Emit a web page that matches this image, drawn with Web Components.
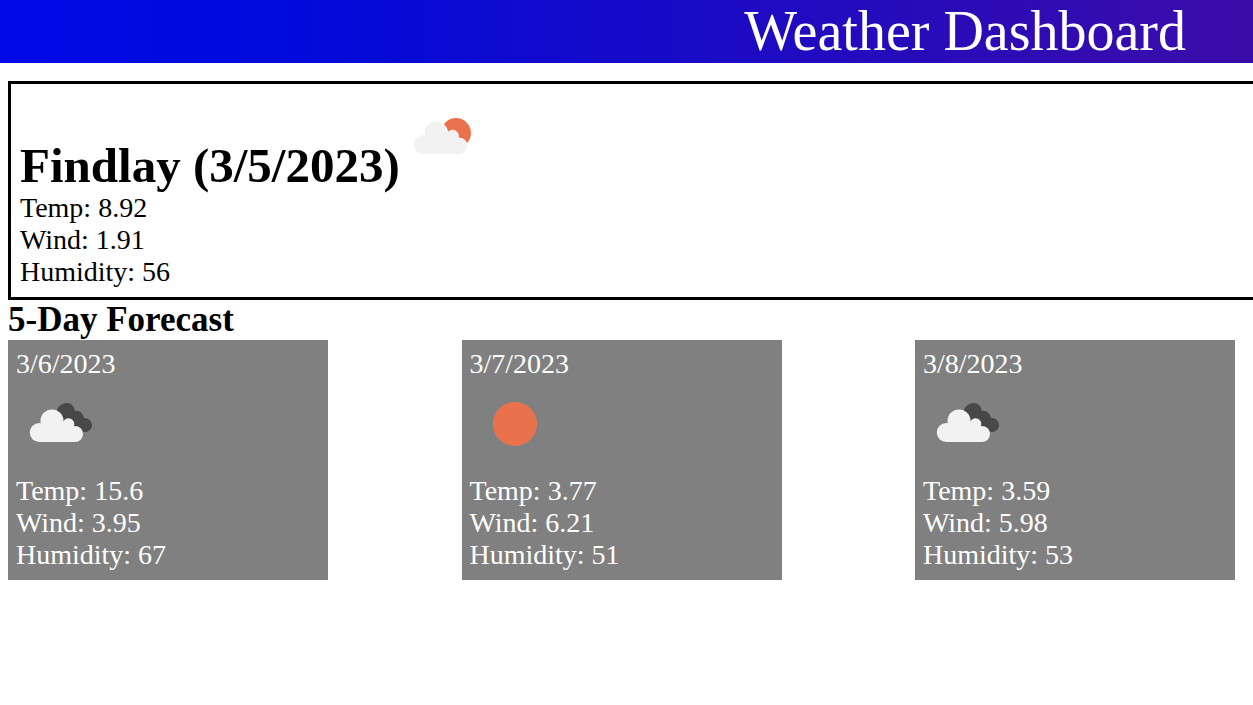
<!DOCTYPE html>
<html lang="en">
<head>
<meta charset="utf-8">
<title>Weather Dashboard</title>
<style>
body{margin:0;background:#fff;color:#000;font:28px/32px "Liberation Serif","Times New Roman",serif;overflow-x:hidden}
</style>
</head>
<body>
<weather-app></weather-app>
<script>
const define = (name, html) => {
  customElements.define(name, class extends HTMLElement {
    connectedCallback() {
      if (this.shadowRoot) return;
      const root = this.attachShadow({ mode: 'open' });
      const t = document.createElement('template');
      t.innerHTML = typeof html === 'function' ? html(this) : html;
      root.append(t.content.cloneNode(true));
    }
  });
};

const cloudShape = `<circle cx="23.3" cy="53.5" r="9.5"/><circle cx="36" cy="42" r="11.5"/><circle cx="52.5" cy="45" r="5.8"/><circle cx="59" cy="55" r="8"/><path d="M23 63V50L34 42H46L55 48L59 53V63Z"/>`;
const icons = {
  sun: `<circle cx="45" cy="45" r="22" fill="#e9724c"/>`,
  partly: `<defs><mask id="m"><rect width="90" height="90" fill="#fff"/><g fill="#000" stroke="#000" stroke-width="1">${cloudShape}</g></mask></defs>
    <circle cx="56" cy="42" r="15" fill="#e9724c" mask="url(#m)"/><g fill="#f2f2f2">${cloudShape}</g>`,
  clouds: `<path fill="#484848" d="M41 31C43 26 47 24 51 24C55 24 58 27 59 32C63 31 67 34 68 39C73 39 76 42 76 46C76 50 73 53 69 53L59 52L44 42Z"/><g fill="#f2f2f2">${cloudShape}</g>`
};

define('weather-icon', el => `
<style>:host{display:inline-block;vertical-align:baseline}svg{display:block;width:90px;height:90px}</style>
<svg viewBox="0 1 90 90" role="img" aria-label="${el.getAttribute('kind')}">${icons[el.getAttribute('kind')]}</svg>`);

define('weather-header', `
<style>
:host{display:block;padding-right:67px;text-align:right;color:#fff;
 background:linear-gradient(90deg,#000ae6 0%,#000adc 22%,#3c0ca8 100%)}
h1{margin:0;font-weight:400;font-size:56px;line-height:63px}
</style>
<h1><slot></slot></h1>`);

define('weather-stats', el => `
<style>:host{display:block}p{margin:0}</style>
<p>Temp: ${el.getAttribute('temp')}</p>
<p>Wind: ${el.getAttribute('wind')}</p>
<p>Humidity: ${el.getAttribute('humidity')}</p>`);

define('current-weather', `
<style>
:host{display:block;border:3px solid #000;border-right:0;padding:8px 9px 9px}
h2{margin:0;font-size:49px;line-height:56px;display:flex;align-items:baseline;height:100px}
</style>
<h2><slot name="place"></slot><slot name="icon"></slot></h2>
<slot></slot>`);

define('forecast-card', `
<style>
:host{display:block;box-sizing:border-box;width:320px;padding:8px 8px 9px;background:#808080;color:#fff}
h4{margin:0;font:inherit}
.icon{height:95px}
</style>
<h4><slot name="date"></slot></h4>
<div class="icon"><slot name="icon"></slot></div>
<slot></slot>`);

define('forecast-list', `
<style>
:host{display:block}
h3{margin:0;font-size:35px;line-height:40px}
.cards{display:flex;justify-content:space-between;padding-right:18px}
</style>
<h3><slot name="title"></slot></h3>
<div class="cards"><slot></slot></div>`);

const days = [
  ['3/6/2023', 'clouds', '15.6', '3.95', '67'],
  ['3/7/2023', 'sun', '3.77', '6.21', '51'],
  ['3/8/2023', 'clouds', '3.59', '5.98', '53']
];

define('weather-app', `
<style>:host{display:block}main{margin:18px 0 0 8px}</style>
<weather-header>Weather Dashboard</weather-header>
<main>
  <current-weather>
    <span slot="place">Findlay (3/5/2023)</span>
    <weather-icon slot="icon" kind="partly"></weather-icon>
    <weather-stats temp="8.92" wind="1.91" humidity="56"></weather-stats>
  </current-weather>
  <forecast-list>
    <span slot="title">5-Day Forecast</span>
    ${days.map(([date, kind, temp, wind, humidity]) => `
    <forecast-card>
      <span slot="date">${date}</span>
      <weather-icon slot="icon" kind="${kind}"></weather-icon>
      <weather-stats temp="${temp}" wind="${wind}" humidity="${humidity}"></weather-stats>
    </forecast-card>`).join('')}
  </forecast-list>
</main>`);
</script>
</body>
</html>
